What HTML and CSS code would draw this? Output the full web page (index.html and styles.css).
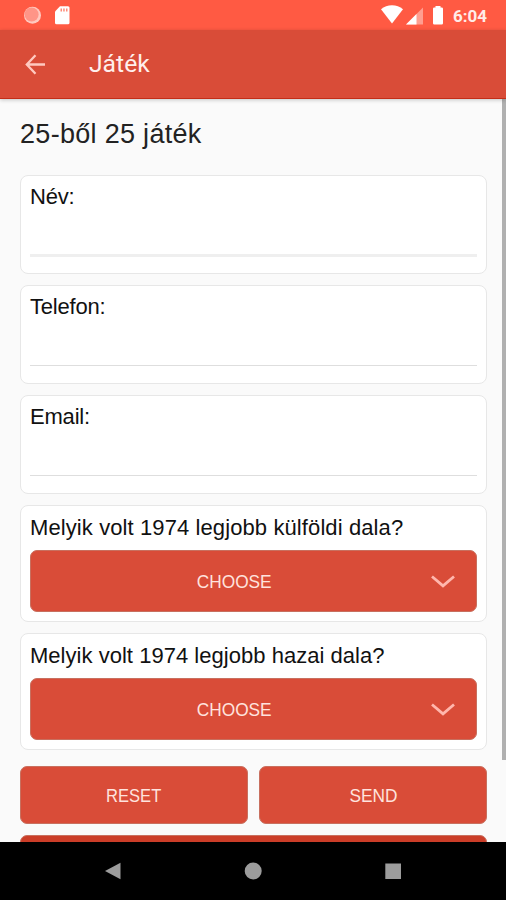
FILE: index.html
```html
<!DOCTYPE html>
<html lang="hu">
<head>
<meta charset="utf-8">
<title>Játék</title>
<link rel="stylesheet" href="styles.css">
</head>
<body>
<div class="statusbar">
  <svg class="status-left" width="54" height="24" viewBox="0 0 54 24">
    <circle cx="12.500" cy="12.300" r="8.500" fill="#ffc9bf"/>
    <circle cx="11.600" cy="11.500" r="7" fill="#ff9587"/>
    <path d="M40 3.300h8a1.500 1.500 0 0 1 1.500 1.500v15a1.500 1.500 0 0 1-1.500 1.500H36.500a1.500 1.500 0 0 1-1.500-1.500V8.500z" fill="#fff"/>
    <path d="M40.500 5.500h1.500v3h-1.500zM43.200 5.500h1.500v3h-1.500zM46 5.500h1.500v3H46z" fill="#ff8a78"/>
  </svg>
  <svg class="status-right" width="66" height="24" viewBox="0 0 66 24">
    <path d="M1 6.200C7 .8 17 .8 23 6.200L12 20.500z" fill="#fff"/>
    <path d="M43 4.500v17H26z" fill="#ff9e90"/>
    <path d="M36.500 11v10.500H26z" fill="#fff"/>
    <path d="M55.500 3h5v1.400h1.200A1.300 1.300 0 0 1 63 5.700v14.500a1.300 1.300 0 0 1-1.300 1.300h-7.400a1.300 1.300 0 0 1-1.300-1.300V5.700a1.300 1.300 0 0 1 1.300-1.300h1.200z" fill="#fff"/>
  </svg>
  <span class="clock">6:04</span>
</div>
<header class="toolbar">
  <svg class="back" width="22" height="22" viewBox="0 0 22 22"><path d="M21 10.500H3M11.500 1.300L2.800 10.500l8.700 9.200" fill="none" stroke="#ffc9c0" stroke-width="2.300"/></svg>
  <h1 class="title">Játék</h1>
</header>
<main class="content">
  <h2 class="heading">25-ből 25 játék</h2>
  <section class="card field"><label class="label">Név:</label><div class="line thick"></div></section>
  <section class="card field"><label class="label">Telefon:</label><div class="line"></div></section>
  <section class="card field"><label class="label">Email:</label><div class="line"></div></section>
  <section class="card choice">
    <div class="label foreign">Melyik volt 1974 legjobb külföldi dala?</div>
    <div class="button select"><span class="caption choose">CHOOSE</span><svg class="chevron" width="26" height="16" viewBox="0 0 26 16"><path d="M2 3.500l11 9.300 11-9.300" fill="none" stroke="#ffb7ad" stroke-width="2.800"/></svg></div>
  </section>
  <section class="card choice">
    <div class="label domestic">Melyik volt 1974 legjobb hazai dala?</div>
    <div class="button select"><span class="caption choose">CHOOSE</span><svg class="chevron" width="26" height="16" viewBox="0 0 26 16"><path d="M2 3.500l11 9.300 11-9.300" fill="none" stroke="#ffb7ad" stroke-width="2.800"/></svg></div>
  </section>
  <div class="actions">
    <div class="button action"><span class="caption reset">RESET</span></div>
    <div class="button action"><span class="caption">SEND</span></div>
  </div>
  <div class="button more"></div>
  <div class="scrollbar"></div>
</main>
<nav class="navbar">
  <svg width="18" height="18" viewBox="0 0 18 18"><path d="M1 9L16.500 .8v16.400z" fill="#9c9c9c"/></svg>
  <svg width="18" height="18" viewBox="0 0 18 18"><circle cx="9.200" cy="9" r="8.500" fill="#9c9c9c"/></svg>
  <svg width="18" height="18" viewBox="0 0 18 18"><path d="M1.300 1.500h15.700v15.500H1.300z" fill="#9c9c9c"/></svg>
</nav>
</body>
</html>
```
FILE: styles.css
```css
* { box-sizing: border-box; }
body {
  margin: 0;
  width: 506px;
  height: 900px;
  display: flex;
  flex-direction: column;
  overflow: hidden;
  background: #fafafa;
  font-family: "Liberation Sans", Arial, sans-serif;
}
svg { display: block; flex: none; }
.statusbar {
  flex: none;
  height: 30px;
  display: flex;
  align-items: flex-start;
  padding: 3px 0 0 20px;
  background: #ff5a43;
  color: #fff;
}
.status-right { margin-left: 306px; }
.clock {
  margin-left: 7px;
  font: 700 17px/26px Roboto, sans-serif;
  color: #ffece8;
}
.toolbar {
  position: relative;
  z-index: 1;
  flex: none;
  height: 69px;
  display: flex;
  align-items: center;
  padding: 1px 0 0 24px;
  background: #d94c38;
  border-bottom: 1px solid #c32e18;
  box-shadow: 0 1px 4px rgba(0, 0, 0, .22);
}
.title {
  margin: 0 0 1px 43px;
  color: #fff0ed;
  font: 400 24.700px/34px Roboto, sans-serif;
}
.content {
  position: relative;
  flex: 1;
  min-height: 0;
  overflow: hidden;
  padding: 0 19px 0 20px;
}
.heading {
  margin: 19px 0 25px;
  height: 32px;
  font-size: 27px;
  line-height: 32px;
  font-weight: 400;
  letter-spacing: .3px;
  color: #222;
  white-space: nowrap;
}
.card {
  margin-bottom: 11px;
  padding: 8px 9px;
  background: #fff;
  border: 1.500px solid #e7e7e7;
  border-radius: 8px;
}
.field { height: 99px; }
.choice { height: 117px; }
.label {
  display: block;
  height: 28px;
  font-size: 22px;
  line-height: 26px;
  letter-spacing: -.2px;
  color: #111;
  white-space: nowrap;
}
.foreign { letter-spacing: .1px; line-height: 27px; }
.domestic { letter-spacing: .03px; line-height: 27px; }
.line { height: 1px; margin-top: 43px; background: #dedede; }
.thick { height: 3px; margin-top: 42px; background: #efefef; }
.button {
  display: flex;
  align-items: center;
  justify-content: center;
  background: #d94c38;
  border: 1px solid #c8705f;
  border-radius: 7px;
  color: #ffe3de;
  font-size: 19px;
}
.caption { padding-top: 1px; transform: scaleX(.91); }
.caption.reset { transform: scaleX(.87); }
.select { position: relative; height: 62px; margin-top: 8px; }
.choose { margin-right: 39px; }
.chevron { position: absolute; right: 20px; top: 22px; }
.actions { display: flex; gap: 11px; margin-top: 16px; }
.action { flex: 1; height: 58px; }
.more { height: 58px; margin-top: 11px; background: #cb3d28; }
.scrollbar {
  position: absolute;
  top: 0;
  right: 0;
  width: 4px;
  height: 661px;
  background: #b0b0b0;
}
.navbar {
  flex: none;
  height: 58px;
  display: flex;
  justify-content: center;
  align-items: center;
  gap: 122px;
  background: #000;
}
```
